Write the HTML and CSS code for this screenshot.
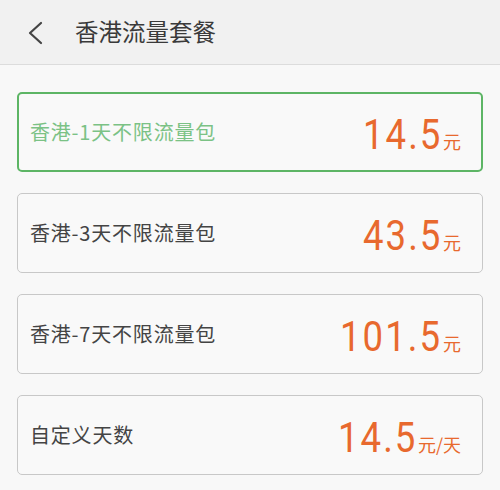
FILE: index.html
```html
<!DOCTYPE html>
<html lang="zh-CN">
<head>
<meta charset="utf-8">
<title>香港流量套餐</title>
<link rel="stylesheet" href="styles.css">
</head>
<body>
<header class="topbar">
  <svg class="back" width="18" height="24" viewBox="0 0 18 24"><path d="M15 2 L4 12 L15 22" fill="none" stroke="#444" stroke-width="2.2" stroke-linecap="round" stroke-linejoin="round"/></svg>
  <h1 class="title">香港流量套餐</h1>
</header>
<main class="list">
  <div class="card selected">
    <span class="label">香港-1天不限流量包</span>
    <span class="price"><span class="num">14.5</span><span class="unit">元</span></span>
  </div>
  <div class="card">
    <span class="label">香港-3天不限流量包</span>
    <span class="price"><span class="num">43.5</span><span class="unit">元</span></span>
  </div>
  <div class="card">
    <span class="label">香港-7天不限流量包</span>
    <span class="price"><span class="num">101.5</span><span class="unit">元</span></span>
  </div>
  <div class="card">
    <span class="label">自定义天数</span>
    <span class="price"><span class="num">14.5</span><span class="unit">元/天</span></span>
  </div>
</main>
</body>
</html>
```
FILE: styles.css
```css
* { box-sizing: border-box; }
html, body { margin: 0; padding: 0; }
body {
  width: 500px;
  height: 490px;
  background: #f8f8f8;
  font-family: "Noto Sans CJK SC", "Noto Sans", sans-serif;
  overflow: hidden;
}
.topbar {
  height: 65px;
  background: #f1f1f1;
  border-bottom: 1px solid #dcdcdc;
  display: flex;
  align-items: center;
  padding-left: 26px;
}
.back { margin-right: 31px; margin-top: 1px; }
.title {
  margin: 0;
  font-size: 23.5px;
  font-weight: normal;
  color: #3a3a3a;
  line-height: 1;
}
.list {
  padding: 27px 17px 0 17px;
  display: flex;
  flex-direction: column;
  gap: 21px;
}
.card {
  height: 80px;
  border: 1.5px solid #c8c8c8;
  border-radius: 5px;
  background: #f9f9f9;
  display: flex;
  align-items: center;
  justify-content: space-between;
  padding: 0 21px 0 12px;
}
.card.selected {
  border: 2.5px solid #5db565;
  padding: 0 20px 0 11px;
}
.label {
  font-size: 20px;
  letter-spacing: 0.8px;
  color: #444;
  line-height: 1;
}
.selected .label { color: #7bc285; }
.price {
  color: #e8692e;
  display: flex;
  align-items: baseline;
  margin-top: 4px;
}
.num {
  display: inline-block;
  font-family: "Roboto", sans-serif;
  font-weight: 400;
  font-size: 43px;
  letter-spacing: 2.4px;
  line-height: 1;
  transform: scaleX(0.85);
  transform-origin: right center;
}
.unit {
  font-size: 18px;
  margin-left: 1px;
  line-height: 1;
}
```
